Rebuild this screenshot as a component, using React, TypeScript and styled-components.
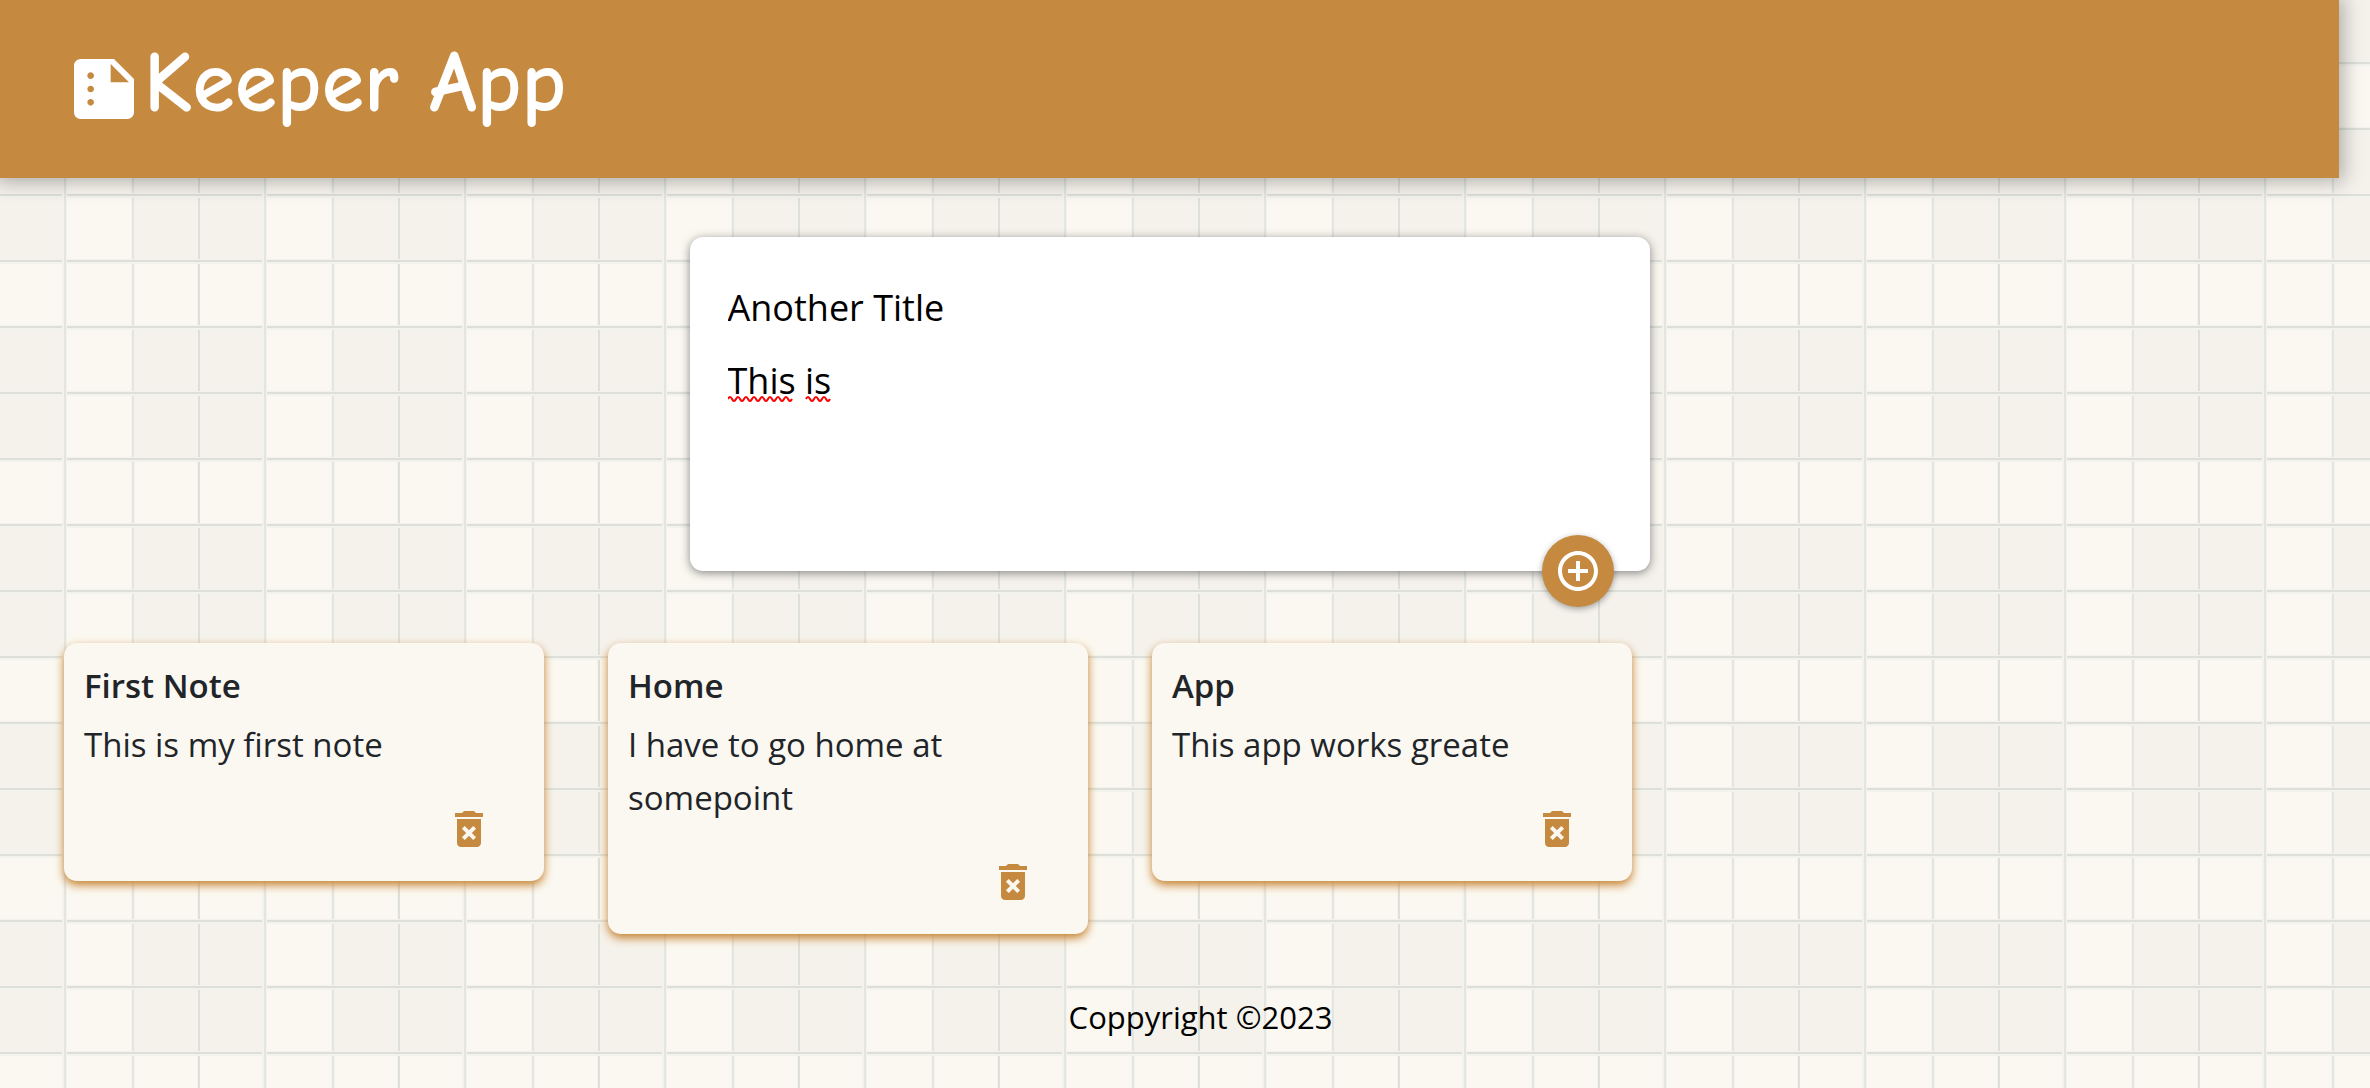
import React, { useState } from "react";
import styled, { createGlobalStyle } from "styled-components";
import { MdAddCircleOutline, MdDeleteForever, MdSummarize } from "react-icons/md";

const accent = "#c58a40";
const paper = "#fbf8f1";
const shade = "#f5f2ec";
const line = "#dfdfda";
const softLine = "#e5e5df";
const seam = "#f3f3ed";

const GlobalStyle = createGlobalStyle`
  *, *::before, *::after { box-sizing: border-box; }
  body {
    margin: 0;
    color: #212529;
    font-family: "Segoe UI", "Open Sans", "Noto Sans", sans-serif;
    background-color: ${paper};
    background-image:
      linear-gradient(90deg, transparent 62px, ${seam} 62px 64px, ${softLine} 64px 66px, ${seam} 66px 67px, transparent 67px),
      linear-gradient(transparent 61px, ${seam} 61px 62px, ${line} 62px 64px, ${seam} 64px 66px, transparent 66px 127px,
        ${seam} 127px 128px, ${line} 128px 130px, ${seam} 130px 132px, transparent 132px 193px,
        ${seam} 193px 194px, ${line} 194px 196px, ${seam} 196px),
      linear-gradient(90deg, transparent 131px, ${seam} 131px 132px, ${softLine} 132px 134px, ${seam} 134px 135px,
        transparent 135px 197px, ${seam} 197px 198px, ${line} 198px),
      linear-gradient(transparent 66px, ${paper} 66px 128px, transparent 128px),
      linear-gradient(90deg, ${shade} 62px, ${paper} 62px 132px, ${shade} 132px);
    background-size: 200px 198px;
  }
`;

const Page = styled.div`
  padding-right: 31px;
`;

const Header = styled.header`
  display: flex;
  align-items: flex-start;
  height: 178px;
  padding: 44px 64px 0;
  background: ${accent};
  color: #fff;
  box-shadow: 0 0 19px 4px rgba(0, 0, 0, 0.3);
`;

const Brand = styled.h1`
  display: flex;
  align-items: center;
  height: 80px;
  margin: 0;
  font-family: "Comic Sans MS", "Comic Neue", "Open Sans", sans-serif;
  font-size: 86px;
  font-weight: 700;
  line-height: 80px;
`;

const BrandIcon = styled(MdSummarize)`
  width: 80px;
  height: 80px;
  margin-top: 10px;
`;

const NoteForm = styled.form`
  position: relative;
  width: 960px;
  max-width: 90%;
  margin: 59px auto 72px;
  padding: 38px;
  background: #fff;
  border-radius: 13px;
  box-shadow: 0 2px 10px rgba(60, 60, 60, 0.6);
`;

const TitleField = styled.input`
  display: block;
  width: 100%;
  height: 64px;
  padding: 0;
  border: 0;
  outline: none;
  background: transparent;
  color: #000;
  font: 36px/52px "Segoe UI", "Open Sans", sans-serif;
`;

const ContentArea = styled.div`
  position: relative;
  padding-top: 16px;
`;

const ContentField = styled.textarea`
  display: block;
  width: 100%;
  height: 178px;
  padding: 0;
  border: 0;
  outline: none;
  resize: none;
  background: transparent;
  color: #000;
  font: 36px/52px "Segoe UI", "Open Sans", sans-serif;
`;

const SpellingMarks = styled.svg`
  position: absolute;
  top: 56px;
  left: 0;
  pointer-events: none;
`;

const AddButton = styled.button`
  position: absolute;
  right: 36px;
  bottom: -36px;
  display: grid;
  place-items: center;
  width: 72px;
  height: 72px;
  padding: 0;
  border: 0;
  border-radius: 50%;
  background: ${accent};
  color: #fff;
  font-size: 48px;
  cursor: pointer;
  box-shadow: 0 2px 6px rgba(0, 0, 0, 0.35);
`;

const NoteList = styled.main`
  display: flex;
  flex-wrap: wrap;
  align-items: flex-start;
  gap: 32px 64px;
  min-height: 292px;
  padding: 0 64px;
`;

const NoteCard = styled.article`
  display: flex;
  flex-direction: column;
  width: 480px;
  padding: 20px;
  background: ${paper};
  border-radius: 13px;
  box-shadow: 0 4px 10px rgba(197, 128, 45, 1);
`;

const NoteTitle = styled.h2`
  margin: 0 0 10px;
  font-size: 33px;
  font-weight: 600;
  line-height: 45px;
`;

const NoteText = styled.p`
  max-width: 400px;
  margin: 0 0 34px;
  font-size: 33px;
  line-height: 53px;
`;

const DeleteButton = styled.button`
  display: grid;
  place-items: center;
  align-self: flex-end;
  height: 48px;
  margin: 0 31px 8px 0;
  padding: 0;
  border: 0;
  background: transparent;
  color: ${accent};
  font-size: 48px;
  cursor: pointer;
`;

const Footer = styled.footer`
  padding: 56px 0 44px 62px;
  color: #000;
  font-size: 31px;
  line-height: 53px;
  text-align: center;
`;

interface NoteData {
  title: string;
  content: string;
}

const initialNotes: NoteData[] = [
  { title: "First Note", content: "This is my first note" },
  { title: "Home", content: "I have to go home at somepoint" },
  { title: "App", content: "This app works greate" },
];

const squiggle = (start: number, waves: number) =>
  `M${start} 4` + " q2 -4 4 0 t4 0".repeat(waves);

export default function App() {
  const [notes, setNotes] = useState(initialNotes);
  const [title, setTitle] = useState("Another Title");
  const [content, setContent] = useState("This is");

  const addNote = (event: React.FormEvent) => {
    event.preventDefault();
    setNotes([...notes, { title, content }]);
    setTitle("");
    setContent("");
  };

  return (
    <Page>
      <GlobalStyle />
      <Header>
        <Brand>
          <BrandIcon aria-hidden />
          Keeper App
        </Brand>
      </Header>
      <NoteForm onSubmit={addNote}>
        <TitleField
          aria-label="Title"
          value={title}
          onChange={(event) => setTitle(event.target.value)}
        />
        <ContentArea>
          <ContentField
            aria-label="Note"
            value={content}
            onChange={(event) => setContent(event.target.value)}
          />
          {content === "This is" && (
            <SpellingMarks width="110" height="8" fill="none" stroke="#f00" strokeWidth="2" aria-hidden>
              <path d={squiggle(0, 8)} />
              <path d={squiggle(78, 3)} />
            </SpellingMarks>
          )}
        </ContentArea>
        <AddButton type="submit" aria-label="Add note">
          <MdAddCircleOutline />
        </AddButton>
      </NoteForm>
      <NoteList>
        {notes.map((note, index) => (
          <NoteCard key={index}>
            <NoteTitle>{note.title}</NoteTitle>
            <NoteText>{note.content}</NoteText>
            <DeleteButton
              type="button"
              aria-label={`Delete ${note.title}`}
              onClick={() => setNotes(notes.filter((_, i) => i !== index))}
            >
              <MdDeleteForever />
            </DeleteButton>
          </NoteCard>
        ))}
      </NoteList>
      <Footer>Coppyright ©2023</Footer>
    </Page>
  );
}
